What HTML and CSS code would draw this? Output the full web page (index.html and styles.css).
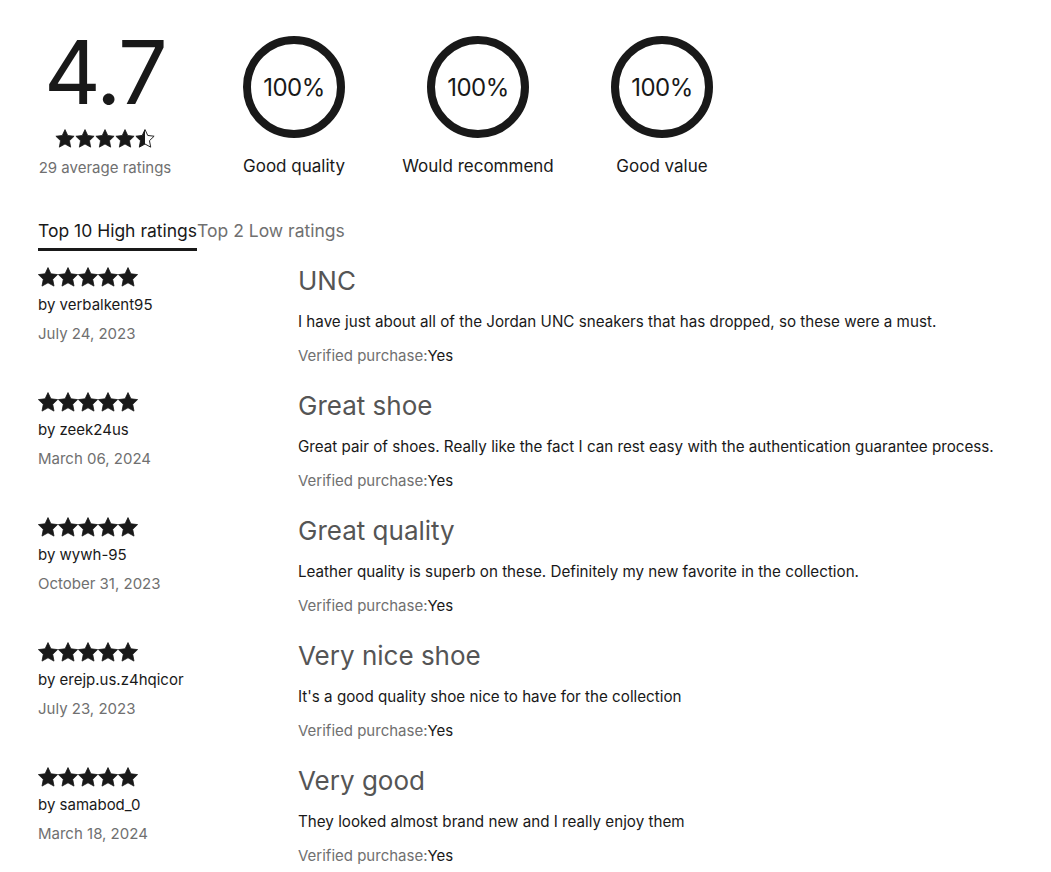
FILE: index.html
```html
<!DOCTYPE html>
<html lang="en">
<head>
<meta charset="UTF-8">
<meta name="viewport" content="width=device-width, initial-scale=1.0">
<title>Ratings and reviews</title>
<link rel="stylesheet" href="styles.css">
</head>
<body>
<svg width="0" height="0" class="defs">
    <defs>
        <path id="star" d="M10 0.6L12.9 6.8 19.6 7.6 14.7 12.3 16 19.1 10 15.8 4 19.1 5.3 12.3 0.4 7.6 7.1 6.8Z"/>
        <clipPath id="half"><rect x="0" y="0" width="10" height="20"/></clipPath>
    </defs>
</svg>
<div class="page">
    <section class="summary">
        <div class="score">
            <div class="score-value">4.7</div>
            <div class="stars stars-sm">
                <svg viewBox="0 0 20 20"><use href="#star"/></svg>
                <svg viewBox="0 0 20 20"><use href="#star"/></svg>
                <svg viewBox="0 0 20 20"><use href="#star"/></svg>
                <svg viewBox="0 0 20 20"><use href="#star"/></svg>
                <svg viewBox="0 0 20 20" class="half-star">
                    <use href="#star" class="outline"/>
                    <use href="#star" clip-path="url(#half)"/>
                </svg>
            </div>
            <div class="score-count">29 average ratings</div>
        </div>
        <div class="metric metric-first">
            <div class="ring">100%</div>
            <div class="metric-label">Good quality</div>
        </div>
        <div class="metric">
            <div class="ring">100%</div>
            <div class="metric-label">Would recommend</div>
        </div>
        <div class="metric">
            <div class="ring">100%</div>
            <div class="metric-label">Good value</div>
        </div>
    </section>

    <div class="tabs">
        <button class="tab active">Top 10 High ratings</button>
        <button class="tab">Top 2 Low ratings</button>
    </div>

    <ul class="reviews">
        <li class="review">
            <div class="review-meta">
                <div class="stars">
                    <svg viewBox="0 0 20 20"><use href="#star"/></svg>
                    <svg viewBox="0 0 20 20"><use href="#star"/></svg>
                    <svg viewBox="0 0 20 20"><use href="#star"/></svg>
                    <svg viewBox="0 0 20 20"><use href="#star"/></svg>
                    <svg viewBox="0 0 20 20"><use href="#star"/></svg>
                </div>
                <div class="author">by verbalkent95</div>
                <div class="date">July 24, 2023</div>
            </div>
            <div class="review-content">
                <h3 class="review-title">UNC</h3>
                <p class="review-text">I have just about all of the Jordan UNC sneakers that has dropped, so these were a must.</p>
                <div class="verified"><span class="verified-label">Verified purchase:</span>Yes</div>
            </div>
        </li>
        <li class="review">
            <div class="review-meta">
                <div class="stars">
                    <svg viewBox="0 0 20 20"><use href="#star"/></svg>
                    <svg viewBox="0 0 20 20"><use href="#star"/></svg>
                    <svg viewBox="0 0 20 20"><use href="#star"/></svg>
                    <svg viewBox="0 0 20 20"><use href="#star"/></svg>
                    <svg viewBox="0 0 20 20"><use href="#star"/></svg>
                </div>
                <div class="author">by zeek24us</div>
                <div class="date">March 06, 2024</div>
            </div>
            <div class="review-content">
                <h3 class="review-title">Great shoe</h3>
                <p class="review-text">Great pair of shoes. Really like the fact I can rest easy with the authentication guarantee process.</p>
                <div class="verified"><span class="verified-label">Verified purchase:</span>Yes</div>
            </div>
        </li>
        <li class="review">
            <div class="review-meta">
                <div class="stars">
                    <svg viewBox="0 0 20 20"><use href="#star"/></svg>
                    <svg viewBox="0 0 20 20"><use href="#star"/></svg>
                    <svg viewBox="0 0 20 20"><use href="#star"/></svg>
                    <svg viewBox="0 0 20 20"><use href="#star"/></svg>
                    <svg viewBox="0 0 20 20"><use href="#star"/></svg>
                </div>
                <div class="author">by wywh-95</div>
                <div class="date">October 31, 2023</div>
            </div>
            <div class="review-content">
                <h3 class="review-title">Great quality</h3>
                <p class="review-text">Leather quality is superb on these. Definitely my new favorite in the collection.</p>
                <div class="verified"><span class="verified-label">Verified purchase:</span>Yes</div>
            </div>
        </li>
        <li class="review">
            <div class="review-meta">
                <div class="stars">
                    <svg viewBox="0 0 20 20"><use href="#star"/></svg>
                    <svg viewBox="0 0 20 20"><use href="#star"/></svg>
                    <svg viewBox="0 0 20 20"><use href="#star"/></svg>
                    <svg viewBox="0 0 20 20"><use href="#star"/></svg>
                    <svg viewBox="0 0 20 20"><use href="#star"/></svg>
                </div>
                <div class="author">by erejp.us.z4hqicor</div>
                <div class="date">July 23, 2023</div>
            </div>
            <div class="review-content">
                <h3 class="review-title">Very nice shoe</h3>
                <p class="review-text">It's a good quality shoe nice to have for the collection</p>
                <div class="verified"><span class="verified-label">Verified purchase:</span>Yes</div>
            </div>
        </li>
        <li class="review">
            <div class="review-meta">
                <div class="stars">
                    <svg viewBox="0 0 20 20"><use href="#star"/></svg>
                    <svg viewBox="0 0 20 20"><use href="#star"/></svg>
                    <svg viewBox="0 0 20 20"><use href="#star"/></svg>
                    <svg viewBox="0 0 20 20"><use href="#star"/></svg>
                    <svg viewBox="0 0 20 20"><use href="#star"/></svg>
                </div>
                <div class="author">by samabod_0</div>
                <div class="date">March 18, 2024</div>
            </div>
            <div class="review-content">
                <h3 class="review-title">Very good</h3>
                <p class="review-text">They looked almost brand new and I really enjoy them</p>
                <div class="verified"><span class="verified-label">Verified purchase:</span>Yes</div>
            </div>
        </li>
    </ul>
</div>
</body>
</html>
```

FILE: styles.css
```css
body {
    margin: 8px;
    font-family: Inter, "Liberation Sans", Arial, sans-serif;
    color: #191919;
    background-color: #fff;
}

.defs {
    position: absolute;
}

.page {
    padding: 20px 0 0 30px;
}

/* summary */

.summary {
    display: flex;
    align-items: flex-start;
}

.score {
    width: 134px;
    display: flex;
    flex-direction: column;
    align-items: center;
}

.score-value {
    font-size: 88px;
    line-height: 88px;
    letter-spacing: -2px;
}

.stars {
    display: flex;
    height: 20px;
}

.stars svg {
    width: 20px;
    height: 20px;
    fill: #191919;
    stroke: #191919;
    stroke-width: 0.8;
    stroke-linejoin: round;
}

.stars-sm {
    margin-top: 13px;
    height: 19px;
}

.stars-sm svg {
    width: 20px;
    height: 19px;
}

.half-star .outline {
    fill: none;
    stroke-width: 1;
}

.half-star use:last-child {
    stroke: none;
}

.score-count {
    margin-top: 10px;
    font-size: 15px;
    line-height: 20px;
    color: #707070;
}

.metric {
    width: 160px;
    margin-top: 8px;
    margin-left: 24px;
    display: flex;
    flex-direction: column;
    align-items: center;
}

.metric-first {
    margin-left: 42px;
}

.ring {
    width: 102px;
    height: 102px;
    box-sizing: border-box;
    border: 8px solid #191919;
    border-radius: 50%;
    display: flex;
    align-items: center;
    justify-content: center;
    font-size: 24px;
    letter-spacing: -0.5px;
}

.metric-label {
    margin-top: 17px;
    font-size: 17px;
    line-height: 22px;
}

/* tabs */

.tabs {
    display: flex;
    margin-top: 41px;
}

.tab {
    padding: 0 0 5px;
    border: none;
    border-bottom: 3px solid transparent;
    background: none;
    font-family: inherit;
    font-size: 17.5px;
    line-height: 24px;
    color: #707070;
    cursor: pointer;
}

.tab.active {
    color: #191919;
    border-bottom-color: #191919;
}

/* reviews */

.reviews {
    list-style: none;
    margin: 14px 0 0;
    padding: 0;
}

.review {
    display: grid;
    grid-template-columns: 260px 1fr;
    margin-bottom: 24px;
}

.review-meta .stars {
    margin-top: 2px;
}

.author {
    margin-top: 8px;
    font-size: 15px;
    line-height: 20px;
}

.date {
    margin-top: 9px;
    font-size: 15px;
    line-height: 20px;
    color: #707070;
}

.review-title {
    margin: 0;
    font-size: 26px;
    font-weight: normal;
    line-height: 32px;
    color: #555;
}

.review-text {
    margin: 15px 0 0;
    font-size: 15.2px;
    line-height: 20px;
}

.verified {
    margin-top: 14px;
    font-size: 15px;
    line-height: 20px;
}

.verified-label {
    color: #707070;
}
```
